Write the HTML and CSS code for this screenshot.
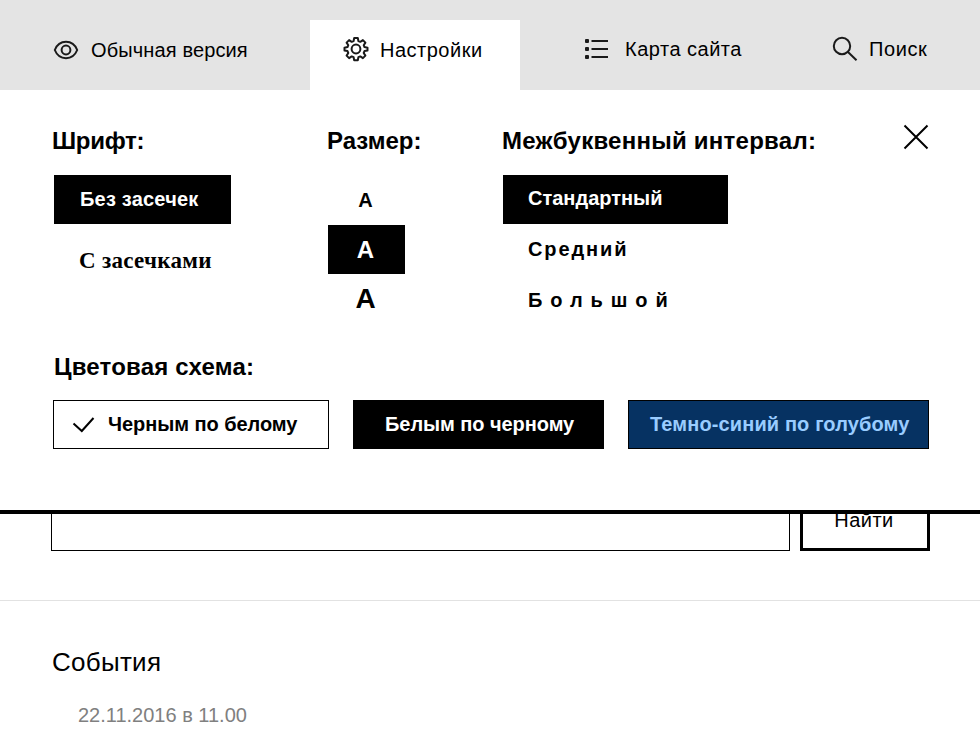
FILE: index.html
```html
<!DOCTYPE html>
<html lang="ru">
<head>
<meta charset="utf-8">
<title>Настройки</title>
<link rel="stylesheet" href="styles.css">
</head>
<body>
<nav class="topbar">
  <a class="nav-item nav-version">
    <svg class="icon-eye" width="26" height="20" viewBox="0 0 26 20"><path d="M1.800 10C4 4.500 8 1.800 13 1.800S22 4.500 24.200 10C22 15.500 18 18.200 13 18.200S4 15.500 1.800 10Z"/><circle cx="13" cy="10" r="4.400"/></svg>
    <span>Обычная версия</span>
  </a>
  <a class="nav-item nav-settings">
    <svg class="icon-gear" width="26" height="26" viewBox="0 0 26 26"><path d="M11.200 2h3.600l.6 3 1.900.8 2.600-1.700 2.500 2.500-1.700 2.600.8 1.900 3 .6v2.800l-3 .6-.8 1.900 1.700 2.600-2.500 2.500-2.600-1.700-1.900.8-.6 3h-3.600l-.6-3-1.900-.8-2.600 1.700-2.500-2.500 1.700-2.600-.8-1.900-3-.6v-2.800l3-.6.8-1.900-1.700-2.600 2.500-2.500 2.600 1.700 1.900-.8z"/><circle cx="13" cy="13" r="4.400"/></svg>
    <span>Настройки</span>
  </a>
  <a class="nav-item nav-map">
    <svg class="icon-list" width="26" height="22" viewBox="0 0 26 22"><path d="M7.500 3h16.500M7.500 11h16.500M7.500 19h16.500"/><rect x="1" y="1" width="4" height="4" rx="1"/><rect x="1" y="9" width="4" height="4" rx="1"/><rect x="1" y="17" width="4" height="4" rx="1"/></svg>
    <span>Карта сайта</span>
  </a>
  <a class="nav-item nav-search">
    <svg class="icon-search" width="26" height="26" viewBox="0 0 26 26"><circle cx="10" cy="10" r="8.200"/><path d="M16 16l8.500 8.300"/></svg>
    <span>Поиск</span>
  </a>
</nav>

<section class="panel">
  <div class="options">
    <div class="group group-font">
      <h2 class="title-font">Шрифт:</h2>
      <div class="choice font-sans selected"><span>Без засечек</span></div>
      <div class="choice font-serif"><span>С засечками</span></div>
    </div>
    <div class="group group-size">
      <h2 class="title-size">Размер:</h2>
      <div class="choice size-s">А</div>
      <div class="choice size-m selected">А</div>
      <div class="choice size-l">А</div>
    </div>
    <div class="group group-spacing">
      <h2 class="title-spacing">Межбуквенный интервал:</h2>
      <div class="choice spacing-normal selected"><span>Стандартный</span></div>
      <div class="choice spacing-medium"><span>Средний</span></div>
      <div class="choice spacing-wide"><span>Большой</span></div>
    </div>
    <svg class="icon-close" width="26" height="26" viewBox="0 0 26 26"><path d="M1.500 1.500l23 23M24.500 1.500l-23 23"/></svg>
  </div>
  <h2 class="scheme-title">Цветовая схема:</h2>
  <div class="schemes">
    <div class="scheme scheme-light">
      <svg class="icon-check" width="24" height="18" viewBox="0 0 24 18"><path d="M1.500 7.500l8.300 7.500L21.500 2"/></svg>
      <span>Черным по белому</span>
    </div>
    <div class="scheme scheme-dark"><span>Белым по черному</span></div>
    <div class="scheme scheme-blue"><span>Темно-синий по голубому</span></div>
  </div>
</section>

<section class="search">
  <div class="search-input"></div>
  <div class="search-button"><span>Найти</span></div>
</section>

<section class="events">
  <h1>События</h1>
  <p>22.11.2016 в 11.00</p>
</section>
</body>
</html>
```
FILE: styles.css
```css
* { box-sizing: border-box; }
body {
  margin: 0;
  height: 733px;
  overflow: hidden;
  background: #fff;
  color: #000;
  font-family: "Liberation Sans", Arial, sans-serif;
  font-size: 20px;
}
h1, h2, p { margin: 0; }
span { white-space: nowrap; }
svg { display: block; flex: none; fill: none; stroke: #1a1a1a; stroke-width: 2; }

.topbar { display: flex; height: 90px; padding-top: 20px; background: #e4e4e4; }
.nav-item { display: flex; align-items: center; height: 60px; flex: none; }
.nav-version { width: 257px; margin-left: 53px; gap: 12px; letter-spacing: 0.13px; }
.nav-settings { width: 210px; height: 70px; padding: 0 0 12px 33px; gap: 11px; background: #fff; letter-spacing: 0.5px; }
.nav-settings span { padding-top: 2px; }
.nav-map { width: 248px; height: 58px; margin-left: 64px; gap: 15px; letter-spacing: 0.5px; }
.nav-search { height: 58px; gap: 11px; letter-spacing: 0.6px; }
.icon-gear { stroke-linejoin: round; }
.icon-list rect { fill: #1a1a1a; stroke: none; }

.panel { height: 424px; padding: 37px 0 0 52px; border-bottom: 4px solid #000; }
.panel h2 { font-size: 24px; line-height: 28px; font-weight: bold; white-space: nowrap; }
.options { display: flex; height: 226px; font-weight: bold; }
.group-font { width: 275px; }
.group-size { width: 175px; }
.group-spacing { width: 401px; }
.options h2 { margin-bottom: 20px; }
.title-font { letter-spacing: -0.3px; }
.title-size { letter-spacing: 0; }
.title-spacing { letter-spacing: 0.25px; }
.choice { display: flex; align-items: center; height: 49px; }
.selected { background: #000; color: #fff; }
.font-sans { width: 177px; margin-left: 2px; padding-left: 26px; letter-spacing: 0.2px; }
.font-serif { margin-top: 12px; padding-left: 27px; font-family: "Liberation Serif", serif; font-size: 23px; letter-spacing: 0.3px; }
.group-size .choice { width: 77px; margin-left: 1px; justify-content: center; padding-right: 2px; }
.size-s { height: 50px; }
.size-m { font-size: 24px; }
.size-l { font-size: 28px; }
.spacing-normal { width: 225px; margin-left: 1px; padding: 0 0 2px 25px; }
.spacing-medium { padding-left: 26px; height: 51px; letter-spacing: 1.9px; }
.spacing-wide { padding-left: 26px; height: 51px; letter-spacing: 7.9px; }
.icon-close { margin-top: -3px; stroke: #000; }

.scheme-title { padding-left: 2px; letter-spacing: 0.2px; }
.schemes { display: flex; gap: 24px; margin: 19px 0 0 1px; font-weight: bold; }
.scheme { display: flex; align-items: center; height: 49px; border: 1px solid #000; }
.scheme-light { width: 276px; padding-left: 18px; gap: 12px; letter-spacing: -0.06px; }
.scheme-dark { width: 251px; padding-left: 31px; background: #000; color: #fff; letter-spacing: -0.06px; }
.scheme-blue { width: 301px; padding-left: 21px; background: #063262; color: #99ccff; letter-spacing: 0.12px; }
.icon-check { stroke: #000; }

.search { display: flex; align-items: flex-end; gap: 10px; height: 87px; padding: 0 0 49px 51px; border-bottom: 1px solid #e2e2e2; }
.search-input { width: 739px; height: 37px; border: 1px solid #000; border-top: 0; }
.search-button { width: 130px; height: 37px; padding-right: 2px; overflow: hidden; border: 3px solid #000; border-top: 0; text-align: center; line-height: 13px; letter-spacing: 0.5px; }

.events { padding: 46px 0 0 52px; }
.events h1 { font-size: 26px; line-height: 30px; font-weight: normal; letter-spacing: 0.28px; }
.events p { margin-top: 26px; padding-left: 26px; line-height: 24px; color: #808080; }
```
